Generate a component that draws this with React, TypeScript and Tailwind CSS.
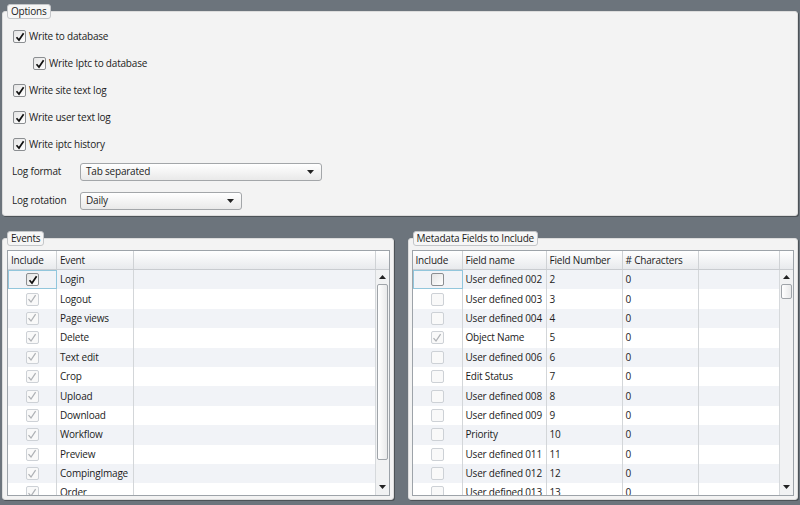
import React from 'react';

const font = "font-['Open_Sans',sans-serif]";

// checkbox used in the options block and in the grids
function Check({ checked, disabled }: { checked: boolean; disabled?: boolean }) {
  return (
    <span
      className={`flex h-[13px] w-[13px] shrink-0 items-center justify-center rounded-[2px] border ${
        disabled
          ? 'border-[#cdd1d6] bg-[#f9f9f9]'
          : 'border-[#8b8e91] bg-gradient-to-br from-[#e4e4e4] to-[#ffffff]'
      }`}
    >
      {checked && (
        <svg width="10" height="10" viewBox="0 0 10 10">
          <path
            d="M1.5 5.2 L4 8 L8.6 1.2"
            fill="none"
            stroke={disabled ? '#aeb1b5' : '#111'}
            strokeWidth={disabled ? 1.2 : 1.7}
          />
        </svg>
      )}
    </span>
  );
}

function Legend({ text }: { text: string }) {
  return (
    <span className="absolute left-[4px] top-[-8px] rounded-[3px] border border-[#c4c6c9] bg-[#f6f6f6] px-[3px] leading-[13px] text-[#1b1b1b]">
      {text}
    </span>
  );
}

function Option({ label, indent }: { label: string; indent?: boolean }) {
  return (
    <div className={`flex h-[27px] items-center gap-[3px] ${indent ? 'pl-[30px]' : 'pl-[10px]'}`}>
      <Check checked />
      <span>{label}</span>
    </div>
  );
}

function Combo({ value, width }: { value: string; width: string }) {
  return (
    <div
      className={`flex h-[18px] ${width} items-center justify-between rounded-[3px] border border-[#a3a6a9] bg-gradient-to-b from-[#ffffff] to-[#e9e9e9] pl-[5px] pr-[7px]`}
    >
      <span>{value}</span>
      <svg width="7" height="4" viewBox="0 0 7 4">
        <path d="M0 0 H7 L3.5 4 Z" fill="#222" />
      </svg>
    </div>
  );
}

type Col = { title: string; w: string };

function ScrollBar({ thumbTop, thumbH }: { thumbTop: number; thumbH: number }) {
  return (
    <div className="relative w-[14px] shrink-0 border-l border-[#d6d9dc] bg-[#f1f2f3]">
      <svg className="absolute left-[3px] top-[5px]" width="7" height="4" viewBox="0 0 7 4">
        <path d="M3.5 0 L7 4 H0 Z" fill="#222" />
      </svg>
      <div
        className="absolute left-[1px] right-[1px] rounded-[2px] border border-[#9fa4a9] bg-gradient-to-r from-[#ffffff] to-[#e8e9ea]"
        style={{ top: thumbTop, height: thumbH }}
      />
      <svg className="absolute bottom-[6px] left-[3px]" width="7" height="4" viewBox="0 0 7 4">
        <path d="M0 0 H7 L3.5 4 Z" fill="#222" />
      </svg>
    </div>
  );
}

function Grid({
  cols,
  rows,
  thumbTop,
  thumbH,
}: {
  cols: Col[];
  rows: { checked: boolean; enabled?: boolean; cells: string[] }[];
  thumbTop: number;
  thumbH: number;
}) {
  return (
    <div className="flex h-full flex-col overflow-hidden border border-[#9da3a9] bg-white">
      <div className="flex h-[19px] shrink-0 border-b border-[#c9ccd0] bg-gradient-to-b from-[#ffffff] to-[#e8eaed]">
        {cols.map((c) => (
          <div key={c.title} className={`${c.w} flex shrink-0 items-center overflow-hidden whitespace-nowrap border-r border-[#cfd2d5] pl-[3px]`}>
            {c.title}
          </div>
        ))}
        <div className="flex-1 border-r border-[#cfd2d5]" />
        <div className="w-[13px] shrink-0" />
      </div>
      <div className="flex min-h-0 flex-1">
        <div className="min-w-0 flex-1 overflow-hidden">
          {rows.map((r, i) => (
            <div key={i} className={`flex h-[19.4px] ${i % 2 === 0 ? 'bg-[#f1f3f7]' : 'bg-white'}`}>
              <div
                className={`${cols[0].w} flex shrink-0 items-center justify-center ${
                  i === 0 ? 'border border-[#92c6dc]' : 'border-r border-[#d3d6d9]'
                }`}
              >
                <Check checked={r.checked} disabled={!r.enabled} />
              </div>
              {r.cells.map((t, j) => (
                <div
                  key={j}
                  className={`${cols[j + 1].w} flex shrink-0 items-center overflow-hidden whitespace-nowrap border-r border-[#d3d6d9] pl-[3px]`}
                >
                  {t}
                </div>
              ))}
              <div className="flex-1" />
            </div>
          ))}
        </div>
        <ScrollBar thumbTop={thumbTop} thumbH={thumbH} />
      </div>
    </div>
  );
}

const events = [
  'Login',
  'Logout',
  'Page views',
  'Delete',
  'Text edit',
  'Crop',
  'Upload',
  'Download',
  'Workflow',
  'Preview',
  'CompingImage',
  'Order',
];

const fields: [string, string, boolean][] = [
  ['User defined 002', '2', false],
  ['User defined 003', '3', false],
  ['User defined 004', '4', false],
  ['Object Name', '5', true],
  ['User defined 006', '6', false],
  ['Edit Status', '7', false],
  ['User defined 008', '8', false],
  ['User defined 009', '9', false],
  ['Priority', '10', false],
  ['User defined 011', '11', false],
  ['User defined 012', '12', false],
  ['User defined 013', '13', false],
];

export default function App() {
  return (
    <div className={`${font} flex h-[505px] w-[800px] flex-col bg-[#6c747c] px-[2px] pb-[5px] pt-[11px] text-[10px] tracking-[-0.2px] text-[#1c1c1c]`}>
      {/* Options */}
      <div className="relative h-[205px] shrink-0 rounded-[3px] border border-[#dcdcdc] bg-[#f3f3f3] pt-[11px] shadow-[1px_1px_0_#4c5257]">
        <Legend text="Options" />
        <Option label="Write to database" />
        <Option label="Write Iptc to database" indent />
        <Option label="Write site text log" />
        <Option label="Write user text log" />
        <Option label="Write iptc history" />
        <div className="flex h-[27px] items-center pl-[9px]">
          <span className="w-[68px]">Log format</span>
          <Combo value="Tab separated" width="w-[242px]" />
        </div>
        <div className="mt-[2px] flex h-[27px] items-center pl-[9px]">
          <span className="w-[68px]">Log rotation</span>
          <Combo value="Daily" width="w-[162px]" />
        </div>
      </div>

      <div className="mt-[22px] flex min-h-0 flex-1 gap-[14px]">
        {/* Events */}
        <div className="relative flex-1 rounded-[3px] border border-[#dcdcdc] bg-[#f3f3f3] pb-[3px] pl-[4px] pr-[3px] pt-[11px] shadow-[1px_1px_0_#4c5257]">
          <Legend text="Events" />
          <Grid
            cols={[
              { title: 'Include', w: 'w-[49px]' },
              { title: 'Event', w: 'w-[77px]' },
            ]}
            rows={events.map((e, i) => ({ checked: true, enabled: i === 0, cells: [e] }))}
            thumbTop={14}
            thumbH={176}
          />
        </div>
        {/* Metadata */}
        <div className="relative flex-1 rounded-[3px] border border-[#dcdcdc] bg-[#f3f3f3] pb-[3px] pl-[3px] pr-[3px] pt-[11px] shadow-[1px_1px_0_#4c5257]">
          <Legend text="Metadata Fields to Include" />
          <Grid
            cols={[
              { title: 'Include', w: 'w-[50px]' },
              { title: 'Field name', w: 'w-[84px]' },
              { title: 'Field Number', w: 'w-[76px]' },
              { title: '# Characters', w: 'w-[76px]' },
            ]}
            rows={fields.map(([n, num, c], i) => ({ checked: c, enabled: i === 0, cells: [n, num, '0'] }))}
            thumbTop={14}
            thumbH={15}
          />
        </div>
      </div>
    </div>
  );
}
